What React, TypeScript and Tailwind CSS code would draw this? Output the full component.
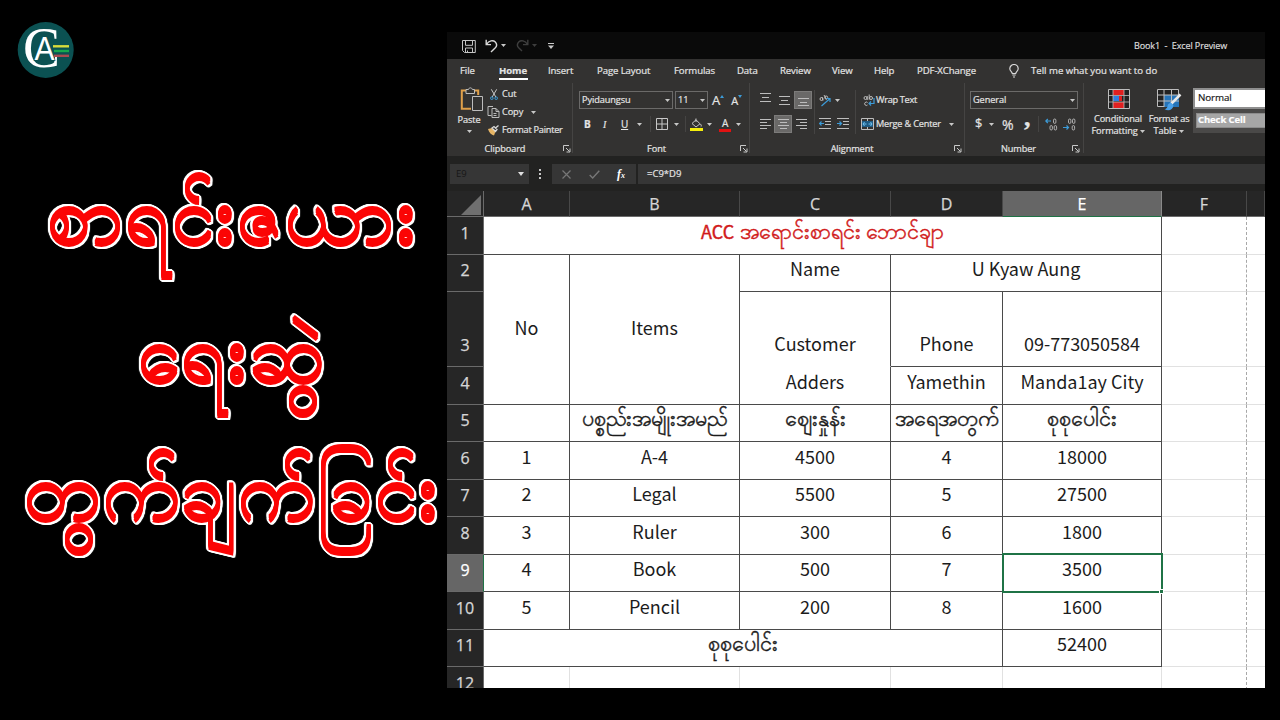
import type { ReactNode } from 'react';
import clsx from 'clsx';

const TABS = [
  { label: 'File', box: 'ml-[13px] w-[14px]' },
  { label: 'Home', box: 'ml-[25px] w-[29px]', active: true },
  { label: 'Insert', box: 'ml-[20px] w-[25px]' },
  { label: 'Page Layout', box: 'ml-[24px] w-[54px]' },
  { label: 'Formulas', box: 'ml-[23px] w-[41px]' },
  { label: 'Data', box: 'ml-[22px] w-[21px]' },
  { label: 'Review', box: 'ml-[22px] w-[30px]' },
  { label: 'View', box: 'ml-[22px] w-[21px]' },
  { label: 'Help', box: 'ml-[21px] w-[20px]' },
  { label: 'PDF-XChange', box: 'ml-[23px] w-[61px]' },
];

const HEADLINES = ['စာရင်းဇယား', 'ရေးဆွဲ', 'တွက်ချက်ခြင်း'];

const COLUMNS = ['A', 'B', 'C', 'D', 'E', 'F', ''];

const ROW_NUMBERS = [1, 2, 3, 4, 5, 6, 7, 8, 9, 10, 11, 12];

const LINES = 'border-b border-r border-[#4a4a4a]';

const CELLS = [
  { text: 'No', at: 'row-start-2 row-span-3 col-start-2 items-center pb-[6px]' },
  { text: 'Items', at: 'row-start-2 row-span-3 col-start-3 items-center pb-[6px]' },
  { text: 'Name', at: 'row-start-2 col-start-4' },
  { text: 'U Kyaw Aung', at: 'row-start-2 col-start-5 col-span-2' },
  { text: 'Customer', at: 'row-start-3 col-start-4 border-b-transparent' },
  { text: 'Phone', at: 'row-start-3 col-start-5' },
  { text: '09-773050584', at: 'row-start-3 col-start-6' },
  { text: 'Adders', at: 'row-start-4 col-start-4' },
  { text: 'Yamethin', at: 'row-start-4 col-start-5' },
  { text: 'Manda1ay City', at: 'row-start-4 col-start-6' },
  { text: '', at: 'row-start-5 col-start-2' },
  { text: 'ပစ္စည်းအမျိုးအမည်', at: 'row-start-5 col-start-3', my: true },
  { text: 'ဈေးနှုန်း', at: 'row-start-5 col-start-4', my: true },
  { text: 'အရေအတွက်', at: 'row-start-5 col-start-5', my: true },
  { text: 'စုစုပေါင်း', at: 'row-start-5 col-start-6', my: true },
  { text: 'စုစုပေါင်း', at: 'row-start-11 col-start-2 col-span-4', my: true },
  { text: '52400', at: 'row-start-11 col-start-6' },
];

const ITEMS = [
  { row: 'row-start-6', values: ['1', 'A-4', '4500', '4', '18000'] },
  { row: 'row-start-7', values: ['2', 'Legal', '5500', '5', '27500'] },
  { row: 'row-start-8', values: ['3', 'Ruler', '300', '6', '1800'] },
  { row: 'row-start-9', values: ['4', 'Book', '500', '7', '3500'] },
  { row: 'row-start-10', values: ['5', 'Pencil', '200', '8', '1600'] },
];

const COL_START = ['col-start-2', 'col-start-3', 'col-start-4', 'col-start-5', 'col-start-6', 'col-start-7', 'col-start-8'];

const ROW_START = [
  'row-start-1', 'row-start-2', 'row-start-3', 'row-start-4', 'row-start-5', 'row-start-6',
  'row-start-7', 'row-start-8', 'row-start-9', 'row-start-10', 'row-start-11', 'row-start-12',
];

const GRID_COLS = 'grid grid-cols-[37px_86px_170px_151px_112px_159px_85px_18px]';

function Caret({ className = '' }: { className?: string }) {
  return (
    <svg className={clsx('w-[5px] h-[3px] shrink-0', className)} viewBox="0 0 5 3">
      <path d="M0 0h5L2.5 3z" fill="#c8c8c8" />
    </svg>
  );
}

function Launcher({ className = '' }: { className?: string }) {
  return (
    <svg className={clsx('w-[8px] h-[8px] shrink-0', className)} viewBox="0 0 8 8" fill="none" stroke="#c8c8c8">
      <path d="M.5 6V.5H6M3 3l3.5 3.5M7 3.5V7H3.5" />
    </svg>
  );
}

function Divider({ className = '' }: { className?: string }) {
  return <div className={clsx('w-px bg-[#454443] shrink-0', className)} />;
}

type Align = 'top' | 'middle' | 'bottom' | 'left' | 'center' | 'right';

const ALIGN_PATHS: Record<Align, string> = {
  top: 'M1 .5h11M3 4.5h7M1 8.5h11',
  middle: 'M1 1.5h11M3 5.5h7M1 9.5h11',
  bottom: 'M1 3.5h11M3 7.5h7M1 10.5h11',
  left: 'M1 .5h11M1 3.5h7M1 6.5h11M1 9.5h7',
  center: 'M1 .5h11M3 3.5h7M1 6.5h11M3 9.5h7',
  right: 'M1 .5h11M5 3.5h7M1 6.5h11M5 9.5h7',
};

function AlignIcon({ kind, active }: { kind: Align; active?: boolean }) {
  return (
    <div className={clsx('w-[18px] h-[18px] flex items-center justify-center', active && 'bg-[#6a6968] border border-[#7c7b7a]')}>
      <svg className={clsx('w-[13px] h-[11px] shrink-0', kind === 'top' && 'mb-[4px]')} viewBox="0 0 13 11" stroke="#bdbdbd" fill="none">
        <path d={ALIGN_PATHS[kind]} />
      </svg>
    </div>
  );
}

function Indent({ right }: { right?: boolean }) {
  return (
    <svg className="w-[12px] h-[12px] shrink-0" viewBox="0 0 12 12" fill="none">
      <path d="M0 .5h12M6 3.5h6M6 6.5h6M0 10.5h12" stroke="#bdbdbd" />
      <path d={right ? 'M0 5.5h4M2.5 3.5l2 2-2 2' : 'M5 5.5H1M2.5 3.5l-2 2 2 2'} stroke="#3c9bd8" strokeWidth="1.2" />
    </svg>
  );
}

function Decimals({ right }: { right?: boolean }) {
  return (
    <svg className="w-[13px] h-[13px] shrink-0" viewBox="0 0 13 13" fill="none">
      <g stroke="#bdbdbd" strokeWidth=".9">
        <rect x={right ? 5.5 : 8.5} y="1" width="2.4" height="4.4" rx="1.2" />
        {right && <rect x="9.5" y="1" width="2.4" height="4.4" rx="1.2" />}
        {!right && <rect x="5" y="7.6" width="2.4" height="4.4" rx="1.2" />}
        <rect x="9.2" y="7.6" width="2.4" height="4.4" rx="1.2" />
      </g>
      <path d={right ? 'M0 9.5h5.5M3.5 7.5l2 2-2 2' : 'M6 3H.8M2.8 1l-2 2 2 2'} stroke="#3c9bd8" strokeWidth="1.2" />
    </svg>
  );
}

function Group({ label, width, labelPad, children }: { label: string; width: string; labelPad: string; children: ReactNode }) {
  return (
    <div className={clsx('flex flex-col h-full shrink-0', width)}>
      <div className="h-[60px] flex">{children}</div>
      <div className={clsx('h-[12px] flex items-center', labelPad)}>
        <span className="flex-1 text-center">{label}</span>
        <Launcher />
      </div>
    </div>
  );
}

function TitleBar() {
  return (
    <div className="h-[27px] bg-[#0a0a0a] flex items-center text-[9px] tracking-[-0.1px] text-[#dcdcdc] [-webkit-text-stroke:0.2px_currentColor] shrink-0">
      <svg className="ml-[15px] mt-[2px] w-[14px] h-[13px]" viewBox="0 0 14 13" fill="none" stroke="#c4c4c4">
        <path d="M.5.5h12.8v12H2.5l-2-2zM3.5.5v4.8h7V.5M3.500 12.500V8h7v4.500M5.500 12.500v-2" />
      </svg>
      <svg className="ml-[9px] w-[13px] h-[14px]" viewBox="0 0 13 14" fill="none" stroke="#d8d8d8" strokeWidth="1.4">
        <path d="M1.200.8v4.800h4.800M1.500 5.300C4 1.500 8 .8 10.300 3c2 2.200 1.500 4.200 0 5.800L6 13" />
      </svg>
      <Caret className="ml-[3px]" />
      <svg className="ml-[10px] w-[13px] h-[14px]" viewBox="0 0 13 14" fill="none" stroke="#3e3e3e" strokeWidth="1.4">
        <path d="M11.800.8v4.800H7M11.500 5.300C9 1.500 5 .8 2.700 3c-2 2.200-1.500 4.200 0 5.800L6 12" />
      </svg>
      <svg className="ml-[3px] w-[5px] h-[3px]" viewBox="0 0 5 3">
        <path d="M0 0h5L2.500 3z" fill="#3e3e3e" />
      </svg>
      <svg className="ml-[11px] w-[6px] h-[6px]" viewBox="0 0 6 6">
        <path d="M0 0h6v1H0zM0 2.500h6L3 6z" fill="#c8c8c8" />
      </svg>
      <span className="ml-auto mr-[38px] w-[93px] whitespace-pre">Book1  -  Excel Preview</span>
    </div>
  );
}

function Tabs() {
  return (
    <div className="h-[24px] flex items-center text-[9.6px] tracking-[-0.1px]">
      {TABS.map((t) => (
        <div key={t.label} className={clsx('h-full relative flex items-center whitespace-nowrap shrink-0', t.box, t.active && 'font-bold')}>
          {t.label}
          {t.active && <div className="absolute left-0 right-0 bottom-[3px] h-[2px] bg-white" />}
        </div>
      ))}
      <svg className="ml-[31px] w-[10px] h-[14px] shrink-0" viewBox="0 0 10 14" fill="none" stroke="#d8d8d8" strokeWidth="1.2">
        <path d="M3.300 9.500C3.300 8 .8 7 .8 4.700a4.200 4.200 0 0 1 8.400 0C9.200 7 6.700 8 6.700 9.500zM3.300 11h3.400M4 13h2" />
      </svg>
      <span className="ml-[12px] whitespace-nowrap tracking-[0px]">Tell me what you want to do</span>
    </div>
  );
}

function Clipboard() {
  return (
    <Group label="Clipboard" width="w-[125px]" labelPad="pr-[1px] pl-0">
      <div className="w-[30px] ml-[7px] flex flex-col items-center">
        <svg className="mt-[4px] ml-[5px] w-[24px] h-[25px] shrink-0" viewBox="0 0 24 25" fill="none">
          <path d="M6.500 3.500H1.800v18.200H11M13.500 3.500h4.700V8" stroke="#e0a04a" strokeWidth="2" />
          <path d="M6 6.500v-4h2.500C8.800.3 12 .3 12.300 2.500h2.200v4z" stroke="#bdbdbd" fill="#333231" />
          <path d="M12.500 9.500h10v14h-10z" stroke="#bdbdbd" fill="#333231" />
        </svg>
        <span className="mt-[1px] leading-[13px]">Paste</span>
        <Caret className="mt-[4px]" />
      </div>
      <div className="ml-[4px] mt-[2px] flex flex-col">
        <div className="h-[18px] flex items-center">
          <svg className="w-[8px] h-[11px] ml-[2px]" viewBox="0 0 8 11" fill="none">
            <path d="M1.300.3L5.800 8M6.700.3L2.200 8" stroke="#c8c8c8" />
            <circle cx="1.800" cy="9.200" r="1.300" stroke="#3c9bd8" />
            <circle cx="6.200" cy="9.200" r="1.300" stroke="#3c9bd8" />
          </svg>
          <span className="ml-[4px]">Cut</span>
        </div>
        <div className="h-[18px] flex items-center">
          <svg className="-ml-px w-[13px] h-[12px]" viewBox="0 0 12 12" fill="none" stroke="#bdbdbd">
            <path d="M4 9.500H.5V.5h5M4.500 2.500h4l3 3v6h-7zM8.500 2.500v3h3M6 7.500h3M6 9.500h3" />
          </svg>
          <span className="ml-[2px]">Copy</span>
          <Caret className="ml-[8px]" />
        </div>
        <div className="h-[18px] flex items-center">
          <svg className="-ml-px w-[13px] h-[11px]" viewBox="0 0 13 11" fill="none">
            <path d="M1 4l4-1 3.500 3.500L7 10.500C4.500 10 2 7.500 1 4z" fill="#e6b566" />
            <path d="M5 3l2-1.500 3 3L8.500 6.500zM8.500 3L11.500.5" stroke="#d8d8d8" strokeWidth="1.3" />
          </svg>
          <span className="ml-[2px] whitespace-nowrap tracking-[-0.25px]">Format Painter</span>
        </div>
      </div>
    </Group>
  );
}

function FontGroup() {
  return (
    <Group label="Font" width="w-[176px]" labelPad="pr-[1px] pl-0">
      <div className="ml-[6px] flex flex-col">
        <div className="mt-[8px] h-[18px] flex items-center">
          <div className="w-[94px] h-[18px] border border-[#6b6a69] flex items-center justify-between pl-[2px] pr-[2px]">
            <span>Pyidaungsu</span>
            <Caret />
          </div>
          <div className="ml-[2px] w-[33px] h-[18px] border border-[#6b6a69] flex items-center justify-between pl-[2px] pr-[2px]">
            <span>11</span>
            <Caret />
          </div>
          <span className="ml-[4px] text-[13px] leading-none">A</span>
          <svg className="mb-[8px] w-[4px] h-[3px]" viewBox="0 0 4 3"><path d="M0 3l2-3 2 3z" fill="#3c9bd8" /></svg>
          <span className="ml-[7px] mt-[1px] text-[11px] leading-none">A</span>
          <svg className="mb-[8px] w-[4px] h-[3px]" viewBox="0 0 4 3"><path d="M0 0l2 3 2-3z" fill="#3c9bd8" /></svg>
        </div>
        <div className="mt-[6px] h-[18px] flex items-center text-[10px]">
          <span className="ml-[5px] w-[7px] font-bold">B</span>
          <span className="ml-[12px] w-[4px] italic font-[Liberation_Serif]">I</span>
          <span className="ml-[14px] w-[8px] underline">U</span>
          <Caret className="ml-[8px]" />
          <Divider className="ml-[8px] h-[16px]" />
          <svg className="ml-[5px] w-[12px] h-[12px]" viewBox="0 0 12 12" fill="none" stroke="#c8c8c8">
            <path d="M.5.500h11v11H.5zM6 .5v11M.5 6h11" />
          </svg>
          <Caret className="ml-[6px]" />
          <Divider className="ml-[6px] h-[16px]" />
          <svg className="ml-[4px] mt-[1px] w-[13px] h-[13px]" viewBox="0 0 13 13" fill="none">
            <path d="M2 5.500L6 1.800l4 4-4 3.200zM6 4V.5M10.500 6c1 1.500 1 2.500.3 2.800" stroke="#c8c8c8" />
            <path d="M0 10h13v3H0z" fill="#f5ee0c" />
          </svg>
          <Caret className="ml-[4px]" />
          <div className="ml-[7px] mt-px w-[12px] h-[14px] flex flex-col items-center">
            <span className="h-[10px] leading-[10px]">A</span>
            <div className="mt-px w-[12px] h-[3px] shrink-0 bg-[#e01212]" />
          </div>
          <Caret className="ml-[5px]" />
        </div>
      </div>
    </Group>
  );
}

function Alignment() {
  return (
    <Group label="Alignment" width="w-[214px]" labelPad="pr-[2px] pl-0">
      <div className="ml-[6px] flex flex-col">
        <div className="mt-[8px] h-[18px] flex items-center gap-[1px]">
          <AlignIcon kind="top" />
          <AlignIcon kind="middle" />
          <AlignIcon kind="bottom" active />
        </div>
        <div className="mt-[6px] h-[18px] flex items-center">
          <AlignIcon kind="left" />
          <AlignIcon kind="center" active />
          <AlignIcon kind="right" />
        </div>
      </div>
      <Divider className="mt-[7px] ml-[2px] h-[44px]" />
      <div className="ml-[4px] flex flex-col">
        <div className="mt-[8px] h-[18px] flex items-center">
          <svg className="w-[13px] h-[13px]" viewBox="0 0 13 13" fill="none">
            <g stroke="#bdbdbd">
              <circle cx="2.500" cy="5" r="1.500" />
              <path d="M4 6.500L3 3M5 1l2.500 4.500" />
              <circle cx="7.200" cy="3.500" r="1.500" />
            </g>
            <path d="M2.500 12L11 4.500M7.500 4.500H11V8" stroke="#3c9bd8" strokeWidth="1.2" />
          </svg>
          <Caret className="ml-[3px]" />
        </div>
        <div className="mt-[6px] h-[18px] flex items-center gap-[6px]">
          <Indent />
          <Indent right />
        </div>
      </div>
      <Divider className="mt-[7px] ml-[6px] h-[44px]" />
      <div className="ml-[5px] flex flex-col">
        <div className="mt-[8px] h-[18px] flex items-center">
          <svg className="ml-[2px] w-[12px] h-[13px]" viewBox="0 0 12 13" fill="none">
            <g stroke="#bdbdbd">
              <circle cx="2.500" cy="4" r="1.500" />
              <path d="M4.200 2v4M6.200.5v5.200M4.500 8.500A1.700 1.700 0 1 0 4.500 11" />
              <circle cx="8" cy="4" r="1.500" />
            </g>
            <path d="M11 4v5.500H6M8 7.500l-2 2 2 2" stroke="#3c9bd8" strokeWidth="1.2" />
          </svg>
          <span className="ml-px whitespace-nowrap tracking-[-0.3px]">Wrap Text</span>
        </div>
        <div className="mt-[6px] h-[18px] flex items-center">
          <svg className="w-[13px] h-[12px]" viewBox="0 0 13 12" fill="none">
            <path d="M.5.500h12v11H.5z" stroke="#bdbdbd" />
            <path d="M6.500 0v3M6.500 9v3" stroke="#bdbdbd" />
            <path d="M1 3h11v6H1z" fill="#1e5a82" />
            <path d="M2 6h3.500M3.500 4L2 6l1.500 2M11 6H7.500M9.500 4L11 6 9.500 8" stroke="#6dc0f0" />
          </svg>
          <span className="ml-[2px] w-[66px] whitespace-nowrap tracking-[-0.2px]">Merge &amp; Center</span>
          <Caret className="ml-[7px]" />
        </div>
      </div>
    </Group>
  );
}

function NumberGroup() {
  return (
    <Group label="Number" width="w-[118px]" labelPad="pr-[3px]">
      <div className="ml-[5px] flex flex-col">
        <div className="mt-[8px] w-[108px] h-[18px] border border-[#6b6a69] flex items-center justify-between px-[2px]">
          <span>General</span>
          <Caret />
        </div>
        <div className="mt-[6px] h-[18px] flex items-center text-[13px]">
          <span className="ml-[5px] w-[7px]">$</span>
          <Caret className="ml-[7px]" />
          <span className="ml-[8px] w-[12px] text-[14px]">%</span>
          <span className="ml-[10px] w-[6px] h-[24px] text-[26px] leading-[12px] font-bold font-[Liberation_Serif]">,</span>
          <Divider className="ml-[8px] h-[16px]" />
          <div className="ml-[6px] flex gap-[5px]">
            <Decimals />
            <Decimals right />
          </div>
        </div>
      </div>
    </Group>
  );
}

function Styles() {
  return (
    <div className="flex-1 flex h-full min-w-0">
      <div className="ml-[6px] w-[56px] flex flex-col items-center text-center leading-[12px]">
        <svg className="mt-[6px] ml-px w-[22px] h-[20px] shrink-0" viewBox="0 0 22 20" fill="none">
          <path d="M.5.500h21v19H.5z" fill="#222" stroke="#bdbdbd" />
          <path d="M5 1h11v5H5zM5 13h11v6H5z" fill="#e02020" />
          <path d="M5 7h6v5H5z" fill="#2f7de0" />
          <path d="M11 7h3v5h-3z" fill="#e02020" />
          <path d="M5 0v20M16 0v20M0 6.500h22M0 13h22" stroke="#bdbdbd" strokeWidth=".8" />
        </svg>
        <span className="mt-[4px]">Conditional</span>
        <span className="flex items-center whitespace-nowrap">Formatting<Caret className="ml-[2px]" /></span>
      </div>
      <div className="ml-[2px] w-[42px] flex flex-col items-center text-center leading-[12px]">
        <svg className="mt-[6px] w-[25px] h-[22px] shrink-0" viewBox="0 0 25 22" fill="none">
          <path d="M.5.500h21v17H.5z" fill="#222" stroke="#bdbdbd" />
          <path d="M7 6h15v12H7z" fill="#2674b8" />
          <path d="M7 0v18M14.500 0v18M0 6h22M0 12h22" stroke="#bdbdbd" />
          <path d="M23.500 5.500L14 15" stroke="#e8e8e8" strokeWidth="2.5" />
          <path d="M14.500 14c-2-.5-4 1-4 3.500-.5 2-2 2.500-3 2.500 3 2.200 8.500 1.500 9-3.500z" fill="#49a0e8" />
        </svg>
        <span className="mt-[2px] whitespace-nowrap tracking-[-0.25px]">Format as</span>
        <span className="flex items-center">Table<Caret className="ml-[3px]" /></span>
      </div>
      <div className="ml-auto mt-[5px] w-[72px] h-[45px] bg-[#4a4948]">
        <div className="h-[21px] border-2 border-r-0 border-[#8f8f8f] bg-white text-[#1a1a1a] text-[9.8px] flex items-center pl-[3px]">Normal</div>
        <div className="mt-[4px] ml-[3px] h-[15px] border border-r-0 border-[#8c8c8c] bg-[#a6a6a6] text-white font-bold text-[9.5px] flex items-center pl-[1px]">
          Check Cell
        </div>
      </div>
    </div>
  );
}

function FormulaBar() {
  return (
    <div className="h-[35px] pt-[8px] bg-[#222221] flex text-[9.5px] text-[#e4e4e4] shrink-0">
      <div className="ml-[3px] w-[79px] h-[20px] bg-[#363636] flex items-center justify-between pl-[6px] pr-[5px] text-[#171717]">
        <span>E9</span>
        <svg className="w-[6px] h-[4px]" viewBox="0 0 6 4"><path d="M0 0h6L3 4z" fill="#e0e0e0" /></svg>
      </div>
      <svg className="ml-[10px] mt-[5px] w-[2px] h-[10px]" viewBox="0 0 2 10" fill="#c8c8c8">
        <path d="M0 0h2v2H0zM0 4h2v2H0zM0 8h2v2H0z" />
      </svg>
      <div className="ml-[11px] w-[84px] h-[20px] bg-[#363636] flex items-center">
        <svg className="ml-[10px] w-[9px] h-[9px]" viewBox="0 0 9 9" fill="none" stroke="#777"><path d="M.5.500l8 8M8.500.500l-8 8" strokeWidth="1.2" /></svg>
        <svg className="ml-[18px] w-[11px] h-[9px]" viewBox="0 0 11 9" fill="none" stroke="#777"><path d="M.7 5l3 3L10.300.8" strokeWidth="1.4" /></svg>
        <span className="ml-[17px] font-[Liberation_Serif] italic font-bold text-[12px] text-white">f</span>
        <span className="mt-[3px] font-[Liberation_Serif] italic font-bold text-[8px] text-white">x</span>
      </div>
      <div className="ml-[2px] flex-1 h-[20px] bg-[#363636] flex items-center pl-[9px] [-webkit-text-stroke:0.2px_currentColor]">=C9*D9</div>
    </div>
  );
}

const MY_TEXT = 'text-[21.6px] [-webkit-text-stroke:0.45px_currentColor]';

function Cell({ text, className, my }: { text: string; className: string; my?: boolean }) {
  const merged = className.includes('row-span-3');
  return (
    <div className={clsx('flex justify-center', LINES, !merged && 'items-end', className)}>
      <span
        className={clsx(
          'whitespace-nowrap',
          merged ? 'h-[30px] leading-[30px]' : 'h-[36px]',
          !merged && (my ? 'leading-[24px]' : 'leading-[27px]'),
          my && MY_TEXT,
        )}
      >
        {text}
      </span>
    </div>
  );
}

function Sheet() {
  return (
    <div className="flex-1 min-h-0 overflow-hidden bg-white text-[#1c1c1c] text-[18px] font-[Noto_Sans_CJK_SC,Noto_Sans,sans-serif]">
      <div className={clsx(GRID_COLS, 'h-[26px] bg-[#262626] text-[#d6d6d6] font-[Open_Sans] text-[16px]')}>
        <div className="border-r border-b border-[#6a6a6a] flex justify-end pt-[4px] pr-[2px]">
          <svg className="w-[20px] h-[20px]" viewBox="0 0 20 20"><path d="M20 0v20H0z" fill="#6f6f6f" /></svg>
        </div>
        {COLUMNS.map((c, i) => (
          <div
            key={i}
            className={clsx(
              'flex items-center justify-center border-r border-b [-webkit-text-stroke:0.25px_currentColor]',
              c === 'E' ? 'bg-[#666] border-r-[#8a8a8a] border-b-[#1f7346] text-white' : 'border-r-[#484848] border-b-[#6a6a6a]',
            )}
          >
            {c}
          </div>
        ))}
      </div>
      <div className={clsx(GRID_COLS, 'grid-rows-[38px_37px_75px_38px_37px_38px_37px_38px_37px_38px_37px_38px]')}>
        {ROW_NUMBERS.map((n, i) => (
          <div
            key={n}
            className={clsx(
              'col-start-1 flex items-end justify-center border-b border-r font-[Open_Sans] text-[16px] text-[#d6d6d6] [-webkit-text-stroke:0.25px_currentColor]',
              ROW_START[i],
              n === 9 ? 'bg-[#666] border-b-[#6a6a6a] border-r-[#1f7346] text-white' : 'bg-[#262626] border-[#6a6a6a]',
            )}
          >
            <span className="h-[36px] leading-[30px]">{n}</span>
          </div>
        ))}
        <div className={clsx('row-start-1 col-start-2 col-span-5 flex items-end justify-center gap-[6px] text-[#d11a1a]', LINES)}>
          <span className="h-[36px] leading-[27px] [-webkit-text-stroke:0.4px_currentColor]">ACC</span>
          <span className={clsx('h-[36px] leading-[24px] whitespace-nowrap', MY_TEXT)}>အရောင်းစာရင်း ဘောင်ချာ</span>
        </div>
        {CELLS.map((c, i) => (
          <Cell key={i} text={c.text} my={c.my} className={c.at} />
        ))}
        {ITEMS.map((item) =>
          item.values.map((v, i) =>
            item.row === 'row-start-9' && i === 4 ? (
              <div key={v} className="relative row-start-9 col-start-6">
                <div className="absolute -left-[1px] -top-[2px] w-[161px] h-[40px] border-2 border-[#1f7346] flex justify-center pr-px">
                  <span className="h-[36px] leading-[27px]">{v}</span>
                </div>
                <div className="absolute -right-[2px] -bottom-[2px] w-[5px] h-[5px] bg-[#1f7346] border border-white" />
              </div>
            ) : (
              <Cell key={i} text={v} className={clsx(item.row, COL_START[i])} />
            ),
          ),
        )}
        {ROW_START.slice(0, 11).map((r) => (
          <div key={r} className={clsx(r, 'col-start-7 border-b border-b-[#e1e1e1] border-r border-dashed border-r-[#a8a8a8] [border-bottom-style:solid]')} />
        ))}
        {ROW_START.slice(0, 11).map((r) => (
          <div key={r} className={clsx(r, 'col-start-8 border-b border-[#e1e1e1]')} />
        ))}
        {COL_START.slice(0, 5).map((c) => (
          <div key={c} className={clsx('row-start-12 border-r border-[#e1e1e1]', c)} />
        ))}
        <div className="row-start-12 col-start-7 border-r border-dashed border-[#a8a8a8]" />
      </div>
    </div>
  );
}

function Logo() {
  return (
    <svg className="ml-[17px] mt-[21px] w-[58px] h-[58px] shrink-0" viewBox="0 0 58 58">
      <circle cx="28.700" cy="29" r="28" fill="#0b5152" />
      <text x="6" y="46" fontFamily="Liberation Serif" fontSize="56" textLength="37" lengthAdjust="spacingAndGlyphs" fill="#fff">C</text>
      <text x="17.500" y="39" fontFamily="Liberation Sans" fontSize="33" textLength="20" lengthAdjust="spacingAndGlyphs" fill="#fff" stroke="#0b5152" strokeWidth="1.5" paintOrder="stroke">A</text>
      <path d="M36 25.300h16" stroke="#d8dc3c" strokeWidth="2.4" />
      <path d="M37 30h15" stroke="#16a84e" strokeWidth="2.4" />
      <path d="M37 34.800h15" stroke="#a84a50" strokeWidth="2.4" />
    </svg>
  );
}

// red letters thickened up and down, then outlined in white on every side
const HEADLINE_INK =
  '[text-shadow:0_-2.5px_#fb0505,0_-1.2px_#fb0505,0_1.2px_#fb0505,0_2.5px_#fb0505] [filter:drop-shadow(1px_0_0_white)_drop-shadow(-1px_0_0_white)_drop-shadow(0_1px_0_white)_drop-shadow(0_-1px_0_white)_drop-shadow(1px_1px_0_white)_drop-shadow(-1px_-1px_0_white)]';

export default function App() {
  return (
    <div className="w-[1280px] h-[720px] bg-black flex overflow-hidden font-[Open_Sans,sans-serif]">
      <div className="w-[447px] flex flex-col shrink-0">
        <Logo />
        <div className="mt-[66px] pl-[15px] flex flex-col items-center text-[#fb0505] font-[Noto_Sans,sans-serif] whitespace-nowrap text-[78px]">
          {HEADLINES.map((line) => (
            <div key={line} className={clsx('h-[138px] leading-[136px] scale-x-[1.035]', HEADLINE_INK)}>{line}</div>
          ))}
        </div>
      </div>

      <div className="mt-[32px] w-[818px] h-[656px] flex flex-col overflow-hidden">
        <TitleBar />
        <div className="h-[97px] bg-[#333231] text-[#e4e4e4] text-[9.2px] tracking-[-0.1px] [-webkit-text-stroke:0.2px_currentColor] shrink-0">
          <Tabs />
          <div className="h-[73px] flex">
            <Clipboard />
            <Divider className="h-[70px]" />
            <FontGroup />
            <Divider className="h-[70px]" />
            <Alignment />
            <Divider className="h-[70px]" />
            <NumberGroup />
            <Divider className="h-[70px]" />
            <Styles />
          </div>
        </div>
        <FormulaBar />
        <Sheet />
      </div>
    </div>
  );
}
